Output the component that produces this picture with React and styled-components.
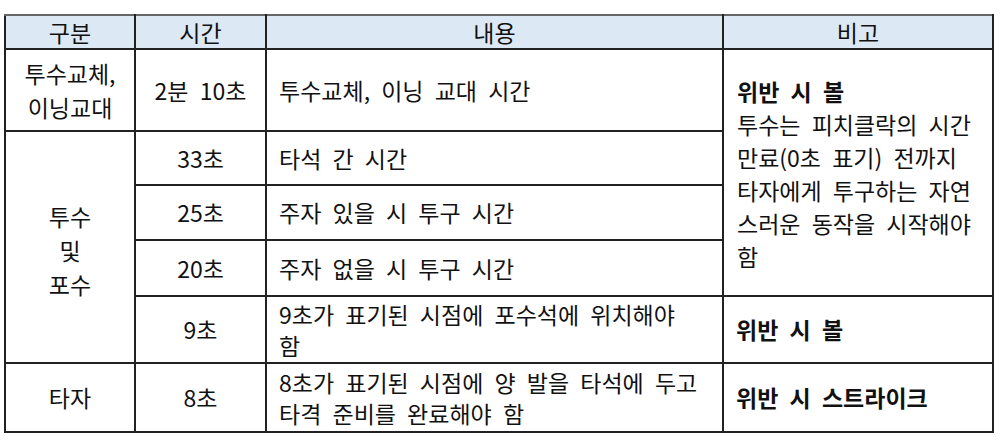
import React from "react";
import styled, { createGlobalStyle } from "styled-components";

const GlobalStyle = createGlobalStyle`
  body {
    margin: 0;
    background: #ffffff;
    font-family: "Noto Sans CJK KR", "Noto Sans", sans-serif;
    color: #111111;
  }
`;

const Page = styled.div`
  padding: 14px 8px 0 4px;
`;

const Table = styled.table`
  width: 988px;
  table-layout: fixed;
  border-collapse: collapse;
  font-size: 23px;
  word-spacing: 6px;
  white-space: nowrap;
  border: 2px solid #333333;
`;

const HeadCell = styled.th`
  height: 32px;
  padding: 0;
  font-weight: 400;
  line-height: 30px;
  text-align: center;
  background: #dde8f5;
  border: 2px solid #222222;
  border-top-color: #666666;
`;

const Cell = styled.td`
  height: ${(p) => p.$h - 2}px;
  padding: ${(p) => (p.$left ? "0 0 0 12px" : "0")};
  text-align: ${(p) => (p.$left ? "left" : "center")};
  vertical-align: middle;
  line-height: 31px;
  border: 2px solid #222222;
`;

const GroupCell = styled(Cell)`
  line-height: 34px;
  padding-top: ${(p) => p.$pt || 0}px;
`;

const NoteCell = styled(Cell)`
  line-height: 33px;
  padding: 2px 0 0 13px;
`;

const Strong = styled.b`
  font-weight: 700;
`;

const rowsMid = [
  { time: "33초", text: "타석 간 시간", h: 54 },
  { time: "25초", text: "주자 있을 시 투구 시간", h: 55 },
  { time: "20초", text: "주자 없을 시 투구 시간", h: 56 },
];

export default function App() {
  return (
    <Page>
      <GlobalStyle />
      <Table>
        <colgroup>
          <col style={{ width: 130 }} />
          <col style={{ width: 131 }} />
          <col style={{ width: 457 }} />
          <col style={{ width: 270 }} />
        </colgroup>
        <thead>
          <tr>
            <HeadCell>구분</HeadCell>
            <HeadCell>시간</HeadCell>
            <HeadCell>내용</HeadCell>
            <HeadCell>비고</HeadCell>
          </tr>
        </thead>
        <tbody>
          <tr>
            <GroupCell $h={82}>
              투수교체,
              <br />
              이닝교대
            </GroupCell>
            <Cell $h={82}>2분 10초</Cell>
            <Cell $h={82} $left>
              투수교체, 이닝 교대 시간
            </Cell>
            <NoteCell rowSpan={4} $h={82} $left>
              <Strong>위반 시 볼</Strong>
              <br />
              투수는 피치클락의 시간
              <br />
              만료(0초 표기) 전까지
              <br />
              타자에게 투구하는 자연
              <br />
              스러운 동작을 시작해야
              <br />함
            </NoteCell>
          </tr>
          {rowsMid.map((r, i) => (
            <tr key={r.time}>
              {i === 0 && (
                <GroupCell rowSpan={4} $h={54} $pt={6}>
                  투수
                  <br />및<br />
                  포수
                </GroupCell>
              )}
              <Cell $h={r.h}>{r.time}</Cell>
              <Cell $h={r.h} $left>
                {r.text}
              </Cell>
            </tr>
          ))}
          <tr>
            <Cell $h={67}>9초</Cell>
            <Cell $h={67} $left>
              9초가 표기된 시점에 포수석에 위치해야
              <br />함
            </Cell>
            <Cell $h={67} $left>
              <Strong>위반 시 볼</Strong>
            </Cell>
          </tr>
          <tr>
            <Cell $h={69}>타자</Cell>
            <Cell $h={69}>8초</Cell>
            <Cell $h={69} $left>
              8초가 표기된 시점에 양 발을 타석에 두고
              <br />
              타격 준비를 완료해야 함
            </Cell>
            <Cell $h={69} $left>
              <Strong>위반 시 스트라이크</Strong>
            </Cell>
          </tr>
        </tbody>
      </Table>
    </Page>
  );
}
